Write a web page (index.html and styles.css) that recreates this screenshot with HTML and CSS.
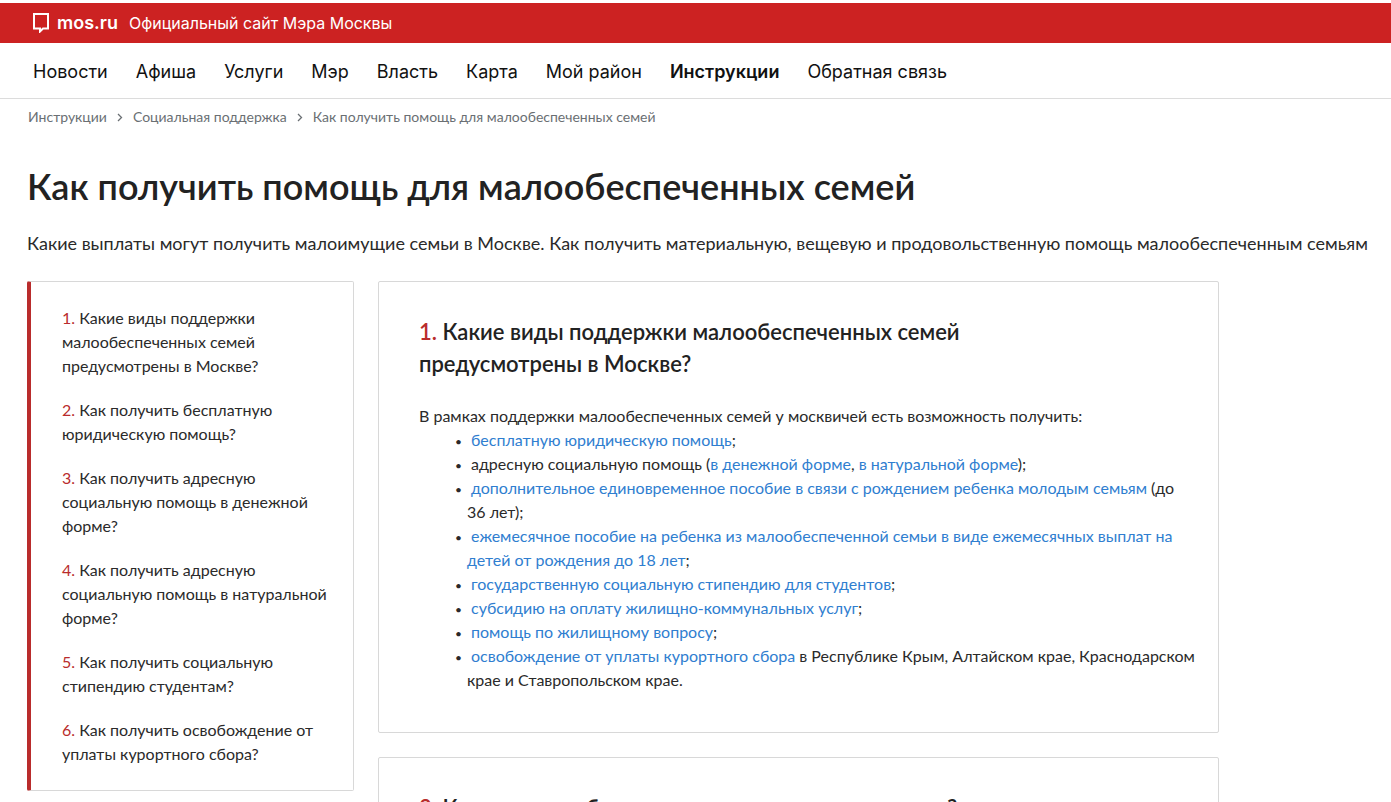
FILE: index.html
```html
<!DOCTYPE html>
<html lang="ru">
<head>
<meta charset="utf-8">
<meta name="viewport" content="width=device-width, initial-scale=1">
<title>Как получить помощь для малообеспеченных семей</title>
<link rel="stylesheet" href="styles.css">
</head>
<body>
<header class="topbar">
  <a class="brand" href="#">
    <svg class="brand-icon" viewBox="0 0 16 20" width="16" height="20" aria-hidden="true"><path d="M1 1h14v14.500h-5l-3 3v-3H1z" fill="none" stroke="#fff" stroke-width="2"/></svg>
    <span class="brand-name">mos.ru</span>
    <span class="brand-title">Официальный сайт Мэра Москвы</span>
  </a>
</header>
<nav class="menu" aria-label="Основное меню">
  <a href="#">Новости</a>
  <a href="#">Афиша</a>
  <a href="#">Услуги</a>
  <a href="#">Мэр</a>
  <a href="#">Власть</a>
  <a href="#">Карта</a>
  <a href="#">Мой район</a>
  <a class="current" href="#">Инструкции</a>
  <a href="#">Обратная связь</a>
</nav>
<main class="page">
  <nav class="crumbs" aria-label="Навигация">
    <a href="#">Инструкции</a>
    <svg viewBox="0 0 6 9" width="6" height="9" aria-hidden="true"><path d="M1 1l3.500 3.500L1 8" fill="none" stroke="#6a6f73" stroke-width="1.300"/></svg>
    <a href="#">Социальная поддержка</a>
    <svg viewBox="0 0 6 9" width="6" height="9" aria-hidden="true"><path d="M1 1l3.500 3.500L1 8" fill="none" stroke="#6a6f73" stroke-width="1.300"/></svg>
    <span>Как получить помощь для малообеспеченных семей</span>
  </nav>
  <h1 class="title">Как получить помощь для малообеспеченных семей</h1>
  <p class="lead">Какие выплаты могут получить малоимущие семьи в Москве. Как получить материальную, вещевую и продовольственную помощь малообеспеченным семьям</p>
  <div class="columns">
    <nav class="contents" aria-label="Содержание">
      <a href="#q1"><span class="num">1.</span> Какие виды поддержки малообеспеченных семей предусмотрены в Москве?</a>
      <a href="#q2"><span class="num">2.</span> Как получить бесплатную юридическую помощь?</a>
      <a href="#q3"><span class="num">3.</span> Как получить адресную социальную помощь в денежной форме?</a>
      <a href="#q4"><span class="num">4.</span> Как получить адресную социальную помощь в натуральной форме?</a>
      <a href="#q5"><span class="num">5.</span> Как получить социальную стипендию студентам?</a>
      <a href="#q6"><span class="num">6.</span> Как получить освобождение от уплаты курортного сбора?</a>
    </nav>
    <div class="articles">
      <section class="card" id="q1">
        <h2><span class="num">1.</span> Какие виды поддержки малообеспеченных семей предусмотрены в Москве?</h2>
        <p>В рамках поддержки малообеспеченных семей у москвичей есть возможность получить:</p>
        <ul>
          <li><a href="#">бесплатную юридическую помощь</a>;</li>
          <li>адресную социальную помощь (<a href="#">в денежной форме</a>, <a href="#">в натуральной форме</a>);</li>
          <li><a href="#">дополнительное единовременное пособие в связи с рождением ребенка молодым семьям</a> (до 36&nbsp;лет);</li>
          <li><a href="#">ежемесячное пособие на ребенка из малообеспеченной семьи в виде ежемесячных выплат на детей от рождения до 18 лет</a>;</li>
          <li><a href="#">государственную социальную стипендию для студентов</a>;</li>
          <li><a href="#">субсидию на оплату жилищно-коммунальных услуг</a>;</li>
          <li><a href="#">помощь по жилищному вопросу</a>;</li>
          <li><a href="#">освобождение от уплаты курортного сбора</a> в Республике Крым, Алтайском крае, Краснодарском крае и Ставропольском крае.</li>
        </ul>
      </section>
      <section class="card" id="q2">
        <h2><span class="num">2.</span> Как получить бесплатную юридическую помощь?</h2>
      </section>
    </div>
  </div>
</main>
</body>
</html>
```
FILE: styles.css
```css
* { box-sizing: border-box; }
body {
  margin: 0;
  background: #fff;
  color: #2a2a2a;
  font: 16px/24px Lato, sans-serif;
}
a { color: inherit; text-decoration: none; }
h1, h2, p, ul { margin: 0; }
.topbar {
  margin-top: 3px;
  padding: 0 33px;
  background: #cc2222;
  color: #fff;
}
.brand { display: flex; align-items: center; height: 40px; font-family: Inter, sans-serif; }
.brand-name { margin: 0 11px 0 8px; font-size: 18px; font-weight: 600; }
.brand-title { font-size: 16px; }
.menu {
  display: flex;
  flex-wrap: wrap;
  column-gap: 28px;
  padding: 16px 33px 14px;
  border-bottom: 1px solid #dcdcdc;
  color: #111;
  font: 18px/25px Inter, sans-serif;
}
.menu .current { font-weight: 600; }
.page { padding: 0 20px 24px 27px; }
.crumbs {
  display: flex;
  align-items: center;
  gap: 10px;
  padding: 8px 0 0 1px;
  color: #6a6f73;
  font-size: 14px;
  line-height: 20px;
}
.title { margin-top: 35px; color: #222; font-size: 36px; line-height: 48px; font-weight: 600; }
.lead { margin-top: 20px; font-size: 18px; line-height: 26px; }
.columns { display: flex; align-items: flex-start; gap: 24px; margin-top: 25px; max-width: 1192px; }
.contents {
  display: flex;
  flex: 0 0 327px;
  flex-direction: column;
  gap: 20px;
  padding: 24px 24px 24px 31px;
  border: 1px solid #d8d8d8;
  border-left: 4px solid #b92c2c;
  border-radius: 2px;
}
.num { color: #b92c2c; }
.articles { display: flex; flex: 1; flex-direction: column; gap: 24px; }
.card { padding: 34px 16px 40px 40px; border: 1px solid #d8d8d8; border-radius: 2px; }
.card h2 { max-width: 600px; margin-bottom: 24px; color: #222; font-size: 22px; line-height: 32px; font-weight: 600; }
.card ul { padding: 0 0 0 48px; list-style: none; }
.card li::before { content: "•"; display: inline-block; width: 16px; margin-left: -12px; font-size: 12px; line-height: 16px; }
.card a { color: #2f7ed0; }
```
